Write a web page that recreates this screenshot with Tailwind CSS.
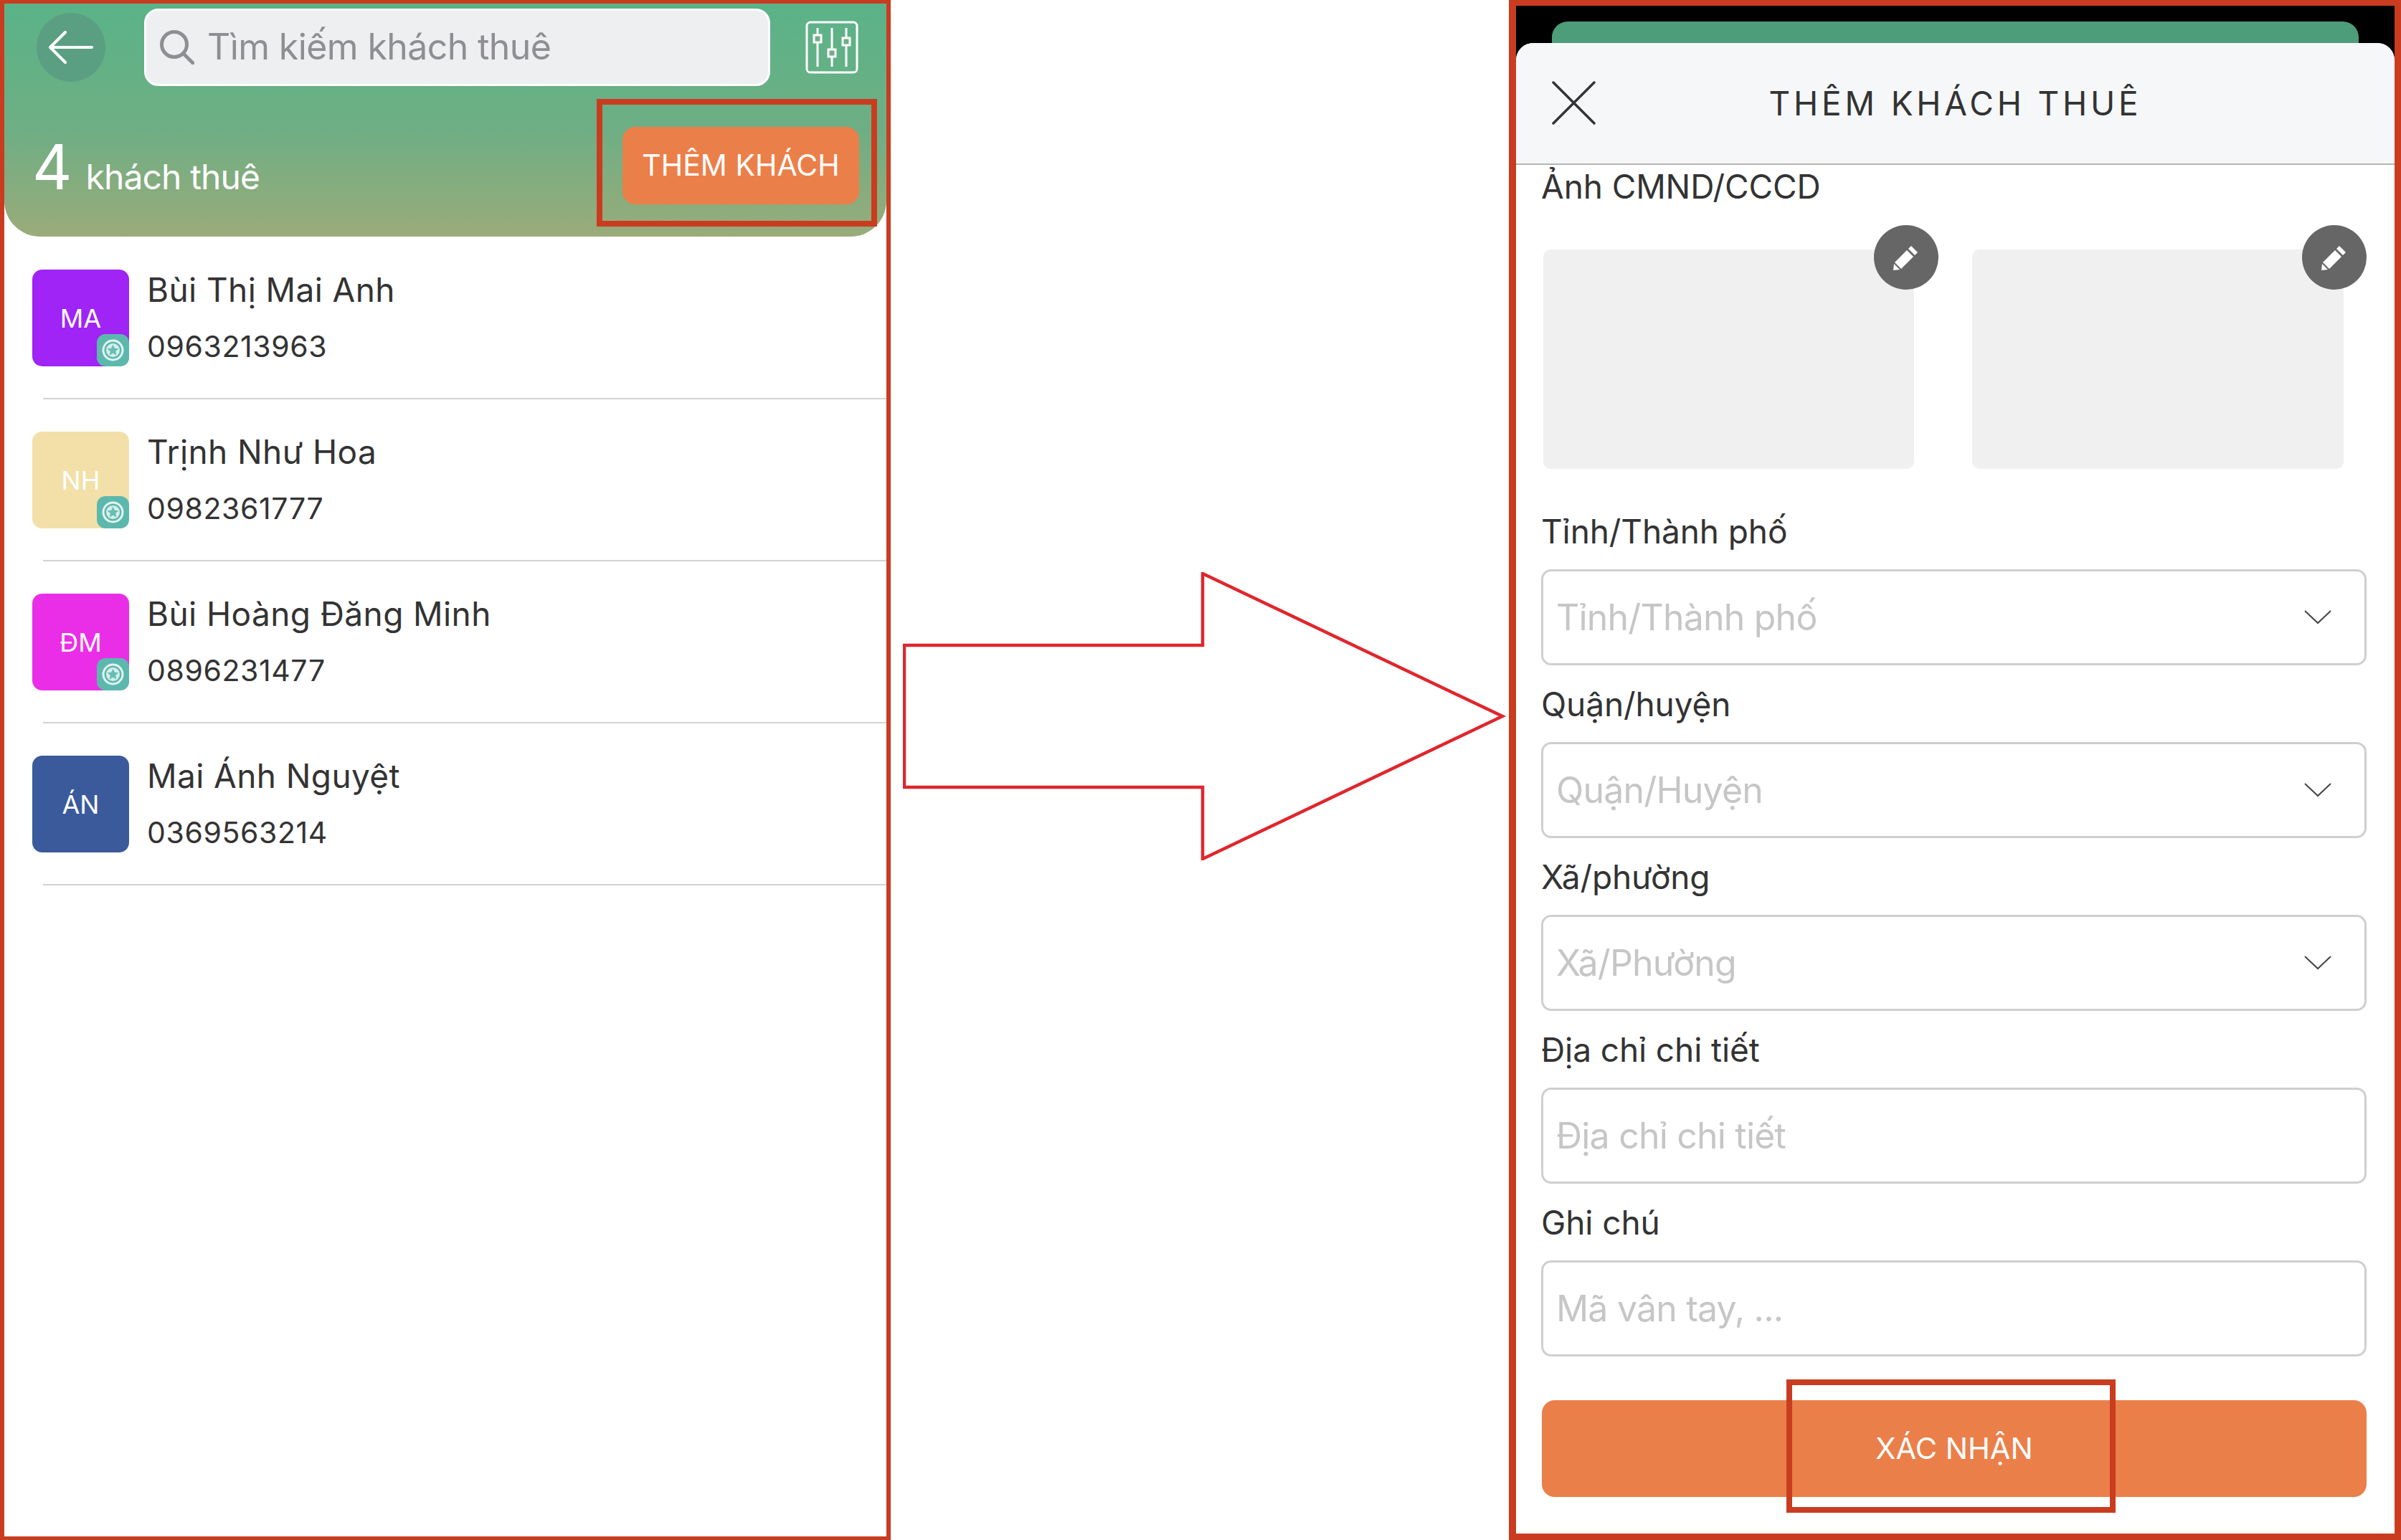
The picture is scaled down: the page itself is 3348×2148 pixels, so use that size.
<!DOCTYPE html>
<html lang="vi">
  <head>
    <meta charset="UTF-8" />
    <title>Thêm khách thuê</title>
    <script src="https://cdn.jsdelivr.net/npm/@tailwindcss/browser@4"></script>
  </head>
  <body class="bg-white">
    <div class="w-[3348px] h-[2148px] flex bg-white overflow-hidden [font-family:Inter,sans-serif]">
      <!-- left phone -->
      <div class="w-[1242px] h-full shrink-0 border-x-[6px] border-t-[5px] border-b-[5px] border-[#c93c20]">
        <div class="relative h-[325px] rounded-b-[50px] bg-[linear-gradient(180deg,#5ab388_0%,#6fae84_55%,#9aab79_100%)]">
          <div class="flex items-center pl-[45px] pt-[7px]">
            <div class="w-[96px] h-[96px] rounded-full bg-[#5a9f81] flex items-center justify-center">
              <svg width="62" height="46" viewBox="0 0 62 46" fill="none" stroke="white" stroke-width="4" stroke-linecap="round" stroke-linejoin="round"><path d="M60 23H2M23 2 2 23l21 21" /></svg>
            </div>
            <div class="ml-[54px] w-[873px] h-[108px] rounded-[20px] bg-[#eeeff1] border-[3px] border-white flex items-center pl-[19px] text-[#8e8e93]">
              <svg width="48" height="48" viewBox="0 0 48 48" fill="none" stroke="#8e8e93" stroke-width="5" stroke-linecap="round"><circle cx="20" cy="20" r="17.5" /><path d="M33 33 46 46" /></svg>
              <span class="ml-[18px] -mt-[3px] text-[50px] tracking-[-0.6px] leading-none">Tìm kiếm khách thuê</span>
            </div>
            <div class="ml-[49px] w-[74px] h-[74px]">
              <svg width="74" height="74" viewBox="0 0 74 74" fill="none" stroke="white" stroke-width="3"><rect x="2" y="2" width="70" height="70" rx="5" /><path d="M17 10v54M37 10v54M57 10v54" /><rect x="12" y="20" width="10" height="10" fill="#6fae84" /><rect x="32" y="40" width="10" height="10" fill="#6fae84" /><rect x="52" y="24" width="10" height="10" fill="#6fae84" /></svg>
            </div>
          </div>
          <div class="flex justify-between items-start pl-[39px] pr-[38px] mt-[57px]">
            <div class="flex items-baseline text-white pt-[6px]">
              <span class="text-[86px] leading-[100px] font-normal">4</span>
              <span class="ml-[19px] text-[48px] leading-none tracking-[-0.9px]">khách thuê</span>
            </div>
            <div class="w-[330px] h-[108px] rounded-[18px] bg-[#eb7f49] text-white text-[41px] flex items-center justify-center">THÊM KHÁCH</div>
          </div>
          <div class="absolute left-[826px] top-[133px] w-[391px] h-[178px] border-[8px] border-[#c93c20]"></div>
        </div>
        <div>
          <div class="pl-[39px]">
            <div class="flex items-start pt-[46px] pb-[44px]">
              <div class="relative w-[135px] h-[135px] rounded-[14px] bg-[#9f24f5] text-white text-[36px] flex items-center justify-center">MA
                <div class="absolute right-0 bottom-0 w-[45px] h-[45px] rounded-[12px] bg-[#5cb8ad] flex items-center justify-center">
                  <svg width="31" height="31" viewBox="0 0 31 31"><circle cx="15.500" cy="15.500" r="13.500" fill="none" stroke="#e4f5f2" stroke-width="3" /><circle cx="15.500" cy="15.500" r="9.500" fill="#d5efeb" /><path d="m15.500 7.500 2.300 5.200 5.600.600-4.200 3.700 1.200 5.500-4.900-2.800-4.900 2.800 1.200-5.500-4.200-3.700 5.600-.600z" fill="#68bdb2" /></svg>
                </div>
              </div>
              <div class="ml-[25px] text-[#333]">
                <div class="text-[46px] leading-[60px] tracking-[0.4px] -mt-[2px]">Bùi Thị Mai Anh</div>
                <div class="text-[41px] leading-[50px] mt-[24px] tracking-[0.6px]">0963213963</div>
              </div>
            </div>
            <div class="ml-[15px] h-[2px] bg-[#d2d2d2]"></div>
            <div class="flex items-start pt-[45px] pb-[44px]">
              <div class="relative w-[135px] h-[135px] rounded-[14px] bg-[#f3e0a8] text-white text-[36px] flex items-center justify-center">NH
                <div class="absolute right-0 bottom-0 w-[45px] h-[45px] rounded-[12px] bg-[#5cb8ad] flex items-center justify-center">
                  <svg width="31" height="31" viewBox="0 0 31 31"><circle cx="15.500" cy="15.500" r="13.500" fill="none" stroke="#e4f5f2" stroke-width="3" /><circle cx="15.500" cy="15.500" r="9.500" fill="#d5efeb" /><path d="m15.500 7.500 2.300 5.200 5.600.600-4.200 3.700 1.200 5.500-4.900-2.800-4.900 2.800 1.200-5.500-4.200-3.700 5.600-.600z" fill="#68bdb2" /></svg>
                </div>
              </div>
              <div class="ml-[25px] text-[#333]">
                <div class="text-[46px] leading-[60px] tracking-[0.4px] -mt-[2px]">Trịnh Như Hoa</div>
                <div class="text-[41px] leading-[50px] mt-[24px] tracking-[0.6px]">0982361777</div>
              </div>
            </div>
            <div class="ml-[15px] h-[2px] bg-[#d2d2d2]"></div>
            <div class="flex items-start pt-[45px] pb-[44px]">
              <div class="relative w-[135px] h-[135px] rounded-[14px] bg-[#ea2ee8] text-white text-[36px] flex items-center justify-center">ĐM
                <div class="absolute right-0 bottom-0 w-[45px] h-[45px] rounded-[12px] bg-[#5cb8ad] flex items-center justify-center">
                  <svg width="31" height="31" viewBox="0 0 31 31"><circle cx="15.500" cy="15.500" r="13.500" fill="none" stroke="#e4f5f2" stroke-width="3" /><circle cx="15.500" cy="15.500" r="9.500" fill="#d5efeb" /><path d="m15.500 7.500 2.300 5.200 5.600.600-4.200 3.700 1.200 5.500-4.900-2.800-4.900 2.800 1.200-5.500-4.200-3.700 5.600-.600z" fill="#68bdb2" /></svg>
                </div>
              </div>
              <div class="ml-[25px] text-[#333]">
                <div class="text-[46px] leading-[60px] tracking-[0.4px] -mt-[2px]">Bùi Hoàng Đăng Minh</div>
                <div class="text-[41px] leading-[50px] mt-[24px] tracking-[0.6px]">0896231477</div>
              </div>
            </div>
            <div class="ml-[15px] h-[2px] bg-[#d2d2d2]"></div>
            <div class="flex items-start pt-[45px] pb-[44px]">
              <div class="w-[135px] h-[135px] rounded-[14px] bg-[#3a5a9c] text-white text-[36px] flex items-center justify-center">ÁN</div>
              <div class="ml-[25px] text-[#333]">
                <div class="text-[46px] leading-[60px] tracking-[0.4px] -mt-[2px]">Mai Ánh Nguyệt</div>
                <div class="text-[41px] leading-[50px] mt-[24px] tracking-[0.6px]">0369563214</div>
              </div>
            </div>
            <div class="ml-[15px] h-[2px] bg-[#d2d2d2]"></div>
          </div>
        </div>
      </div>

      <!-- arrow -->
      <div class="w-[862px] shrink-0 h-full pt-[798px] pl-[17px]">
        <svg width="844" height="402" viewBox="0 0 844 402" fill="none" stroke="#e0262d" stroke-width="4.500" stroke-linejoin="miter"><path d="M2 102H418V2L836 201 418 400V300H2Z" /></svg>
      </div>

      <!-- right phone -->
      <div class="w-[1244px] h-full shrink-0 border-l-[10px] border-r-[9px] border-t-[8px] border-b-[9px] border-[#c93c20] bg-black flex flex-col">
        <div class="pt-[22px] px-[50px]">
          <div class="h-[30px] rounded-t-[22px] bg-[#4d9d7b]"></div>
        </div>
        <div class="flex-1 bg-white rounded-t-[24px] overflow-hidden">
          <div class="relative h-[170px] bg-[#f6f7f8] border-b-2 border-[#b5b5b5] flex items-center justify-center">
            <svg class="absolute left-[50px] top-[53px]" width="61" height="61" viewBox="0 0 61 61" fill="none" stroke="#333" stroke-width="3.500" stroke-linecap="round"><path d="M2 2 59 59M59 2 2 59" /></svg>
            <span class="text-[46px] tracking-[4.800px] text-[#333] leading-none">THÊM KHÁCH THUÊ</span>
          </div>
          <div class="px-[35px]">
            <div class="h-[58px] text-[46px] leading-[60px] text-[#333] tracking-[-0.1px]">Ảnh CMND/CCCD</div>
            <div class="flex mt-[60px] pl-[3px]">
              <div class="relative w-[517px] h-[306px] rounded-[10px] bg-[#f0f0f0]">
                <div class="absolute -top-[34px] -right-[34px] w-[90px] h-[90px] rounded-full bg-[#666] flex items-center justify-center">
                  <svg width="38" height="38" viewBox="0 0 38 38" fill="white"><path d="M26 3 35 12 31 16 22 7Z" /><path d="M20 9 29 18 12 35 3 26Z" /><path d="M2 28 10 36 1 37Z" /></svg>
                </div>
              </div>
              <div class="relative ml-[81px] w-[518px] h-[306px] rounded-[10px] bg-[#f0f0f0]">
                <div class="absolute -top-[34px] -right-[32px] w-[90px] h-[90px] rounded-full bg-[#666] flex items-center justify-center">
                  <svg width="38" height="38" viewBox="0 0 38 38" fill="white"><path d="M26 3 35 12 31 16 22 7Z" /><path d="M20 9 29 18 12 35 3 26Z" /><path d="M2 28 10 36 1 37Z" /></svg>
                </div>
              </div>
            </div>
            <div class="mt-[33px]">
              <div class="h-[107px] flex items-end pb-[23px] text-[46px] leading-[60px] text-[#333] tracking-[-0.1px]">Tỉnh/Thành phố</div>
              <div class="h-[134px] w-[1151px] border-[3px] border-[#cfcfcf] rounded-[14px] flex items-center justify-between pl-[18px] pr-[46px] text-[50px] text-[#c6c6c6] tracking-[-0.8px]">
                <span>Tỉnh/Thành phố</span>
                <svg width="38" height="20" viewBox="0 0 38 20" fill="none" stroke="#444" stroke-width="2"><path d="M1 1 19 18 37 1" /></svg>
              </div>
              <div class="h-[107px] flex items-end pb-[23px] text-[46px] leading-[60px] text-[#333] tracking-[-0.1px]">Quận/huyện</div>
              <div class="h-[134px] w-[1151px] border-[3px] border-[#cfcfcf] rounded-[14px] flex items-center justify-between pl-[18px] pr-[46px] text-[50px] text-[#c6c6c6] tracking-[-0.8px]">
                <span>Quận/Huyện</span>
                <svg width="38" height="20" viewBox="0 0 38 20" fill="none" stroke="#444" stroke-width="2"><path d="M1 1 19 18 37 1" /></svg>
              </div>
              <div class="h-[107px] flex items-end pb-[23px] text-[46px] leading-[60px] text-[#333] tracking-[-0.1px]">Xã/phường</div>
              <div class="h-[134px] w-[1151px] border-[3px] border-[#cfcfcf] rounded-[14px] flex items-center justify-between pl-[18px] pr-[46px] text-[50px] text-[#c6c6c6] tracking-[-0.8px]">
                <span>Xã/Phường</span>
                <svg width="38" height="20" viewBox="0 0 38 20" fill="none" stroke="#444" stroke-width="2"><path d="M1 1 19 18 37 1" /></svg>
              </div>
              <div class="h-[107px] flex items-end pb-[23px] text-[46px] leading-[60px] text-[#333] tracking-[-0.1px]">Địa chỉ chi tiết</div>
              <div class="h-[134px] w-[1151px] border-[3px] border-[#cfcfcf] rounded-[14px] flex items-center pl-[18px] text-[50px] text-[#c6c6c6] tracking-[-0.8px]">Địa chỉ chi tiết</div>
              <div class="h-[107px] flex items-end pb-[23px] text-[46px] leading-[60px] text-[#333] tracking-[-0.1px]">Ghi chú</div>
              <div class="h-[134px] w-[1151px] border-[3px] border-[#cfcfcf] rounded-[14px] flex items-center pl-[18px] text-[50px] text-[#c6c6c6] tracking-[-0.8px]">Mã vân tay, ...</div>
            </div>
            <div class="relative mt-[61px] ml-[1px] w-[1150px] h-[135px] rounded-[18px] bg-[#eb7f49] text-white text-[41.500px] flex items-center justify-center">XÁC NHẬN
              <div class="absolute left-[341px] -top-[29px] w-[459px] h-[186px] border-[8px] border-[#c93c20]"></div>
            </div>
          </div>
        </div>
      </div>
    </div>
  </body>
</html>
